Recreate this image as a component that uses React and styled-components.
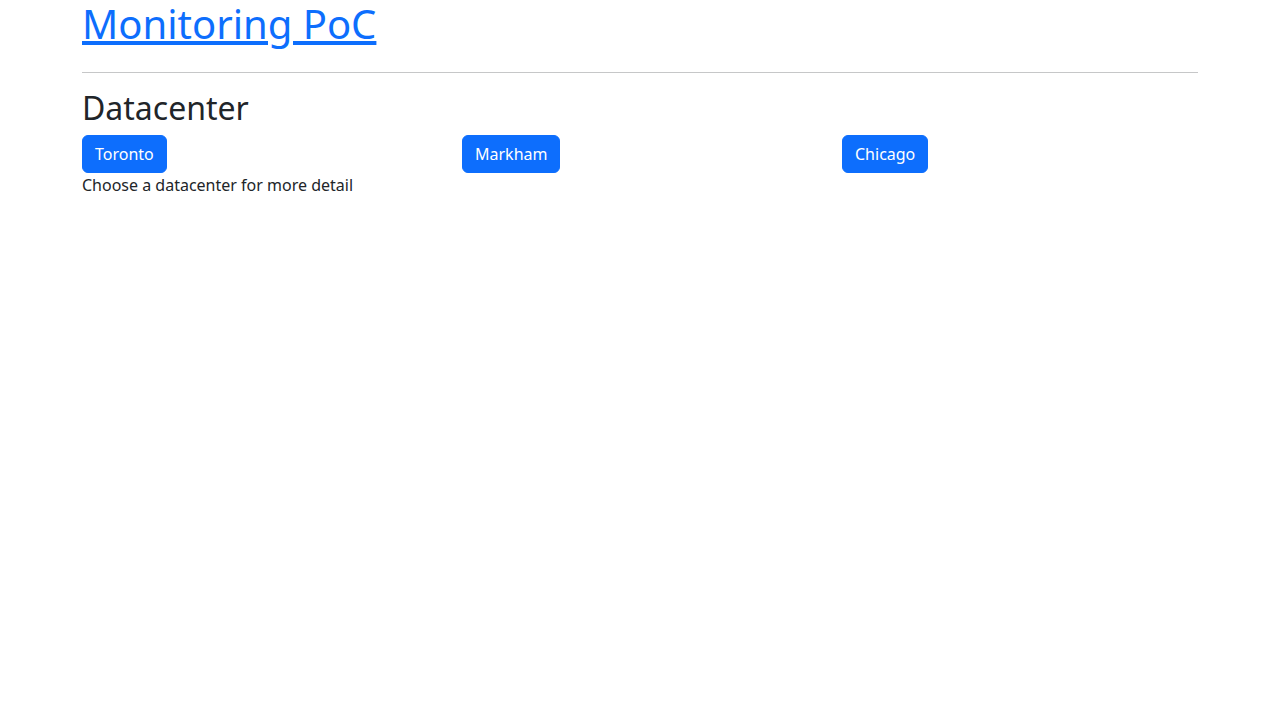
import React from "react";
import styled, { createGlobalStyle } from "styled-components";

const Global = createGlobalStyle`
  *, *::before, *::after { box-sizing: border-box; }
  body {
    margin: 0;
    font-family: "Noto Sans", "Liberation Sans", sans-serif;
    font-size: 16px;
    line-height: 1.5;
    color: #212529;
    background: #fff;
  }
`;

const Container = styled.div`
  width: 100%;
  max-width: 1140px;
  margin: 0 auto;
  padding: 0 12px;
`;

const Title = styled.h1`
  margin: 0 0 24px;
  font-size: 40px;
  font-weight: 400;
  line-height: 1.2;
`;

const TitleLink = styled.a`
  color: #0d6efd;
  text-decoration: underline;
`;

const Rule = styled.hr`
  margin: 16px 0;
  border: 0;
  border-top: 1px solid #c6c7c8;
`;

const Heading = styled.h2`
  margin: 0 0 8px;
  font-size: 32px;
  font-weight: 400;
  line-height: 1.2;
`;

const Row = styled.div`
  display: grid;
  grid-template-columns: repeat(3, 1fr);
  margin: 0 -12px;
`;

const Col = styled.div`
  padding: 0 12px;
`;

const Button = styled.button`
  display: inline-block;
  font-family: inherit;
  font-size: 16px;
  line-height: 1.5;
  padding: 6px 12px;
  color: #fff;
  background: #0d6efd;
  border: 1px solid #0d6efd;
  border-radius: 6px;
  cursor: pointer;
`;

const Note = styled.p`
  margin: 0;
`;

const centers = ["Toronto", "Markham", "Chicago"];

export default function App() {
  return (
    <>
      <Global />
      <Container>
        <Title>
          <TitleLink href="#">Monitoring PoC</TitleLink>
        </Title>
        <Rule />
        <Heading>Datacenter</Heading>
        <Row>
          {centers.map((c) => (
            <Col key={c}>
              <Button type="button">{c}</Button>
            </Col>
          ))}
        </Row>
        <Note>Choose a datacenter for more detail</Note>
      </Container>
    </>
  );
}
